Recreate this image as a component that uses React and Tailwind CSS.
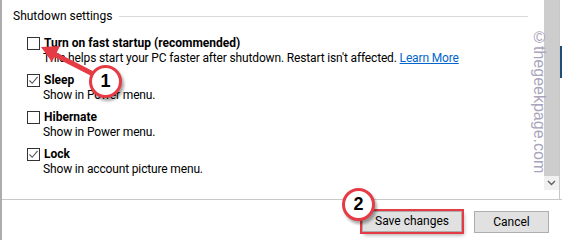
import React from "react";

const Checkbox = ({ checked }) => (
  <span className="w-[13px] h-[13px] border border-[#333333] bg-white flex items-center justify-center shrink-0">
    {checked && (
      <svg width="11" height="11" viewBox="0 0 11 11">
        <path d="M1.5 5.5 L4.2 8.3 L9.6 1.8" fill="none" stroke="#555" strokeWidth="1.1" />
      </svg>
    )}
  </span>
);

const Option = ({ label, checked, children }) => (
  <div className="flex flex-col mb-[7px]">
    <div className="flex items-center h-[15px] gap-[4px]">
      <Checkbox checked={checked} />
      <span className="font-bold leading-[15px]">{label}</span>
    </div>
    <div className="h-[15px] leading-[15px] pl-[16px] tracking-[-0.15px]">{children}</div>
  </div>
);

const Badge = ({ n, className }) => (
  <div
    className={
      "absolute w-[33px] h-[33px] rounded-full bg-white border-[3px] border-[#e53b45] flex items-center justify-center font-bold text-[18px] text-black shadow-[2px_3px_3px_rgba(0,0,0,0.35)] " +
      className
    }
    style={{ fontFamily: "'Liberation Sans', Arial, sans-serif" }}
  >
    {n}
  </div>
);

export default function App() {
  return (
    <div
      className="relative w-[562px] h-[240px] bg-white overflow-hidden text-[12px] text-black border-l-2 border-[#acacac]"
      style={{ fontFamily: "'Segoe UI', Roboto, 'Noto Sans', sans-serif" }}
    >
      <div className="flex h-[199px]">
        <div className="flex-1 flex flex-col pt-[8px] pl-[11px]">
          <div className="flex items-center h-4 mr-[16px]">
            <span className="leading-4">Shutdown settings</span>
            <div className="flex-1 h-px bg-[#d9d9d9] ml-[7px]" />
          </div>
          <div className="flex flex-col pl-[14px] mt-[12px]">
            <Option label="Turn on fast startup (recommended)">
              This helps start your PC faster after shutdown. Restart isn't affected.{" "}
              <span className="text-[#0066cc] underline">Learn More</span>
            </Option>
            <Option label="Sleep" checked>
              Show in Power menu.
            </Option>
            <Option label="Hibernate">Show in Power menu.</Option>
            <Option label="Lock" checked>
              Show in account picture menu.
            </Option>
          </div>
        </div>
        <div className="w-[15px] flex flex-col">
          <div className="h-[176px] bg-[#cdcdcd]" />
          <div className="h-[14px] bg-[#f0f0f0] flex items-center justify-center">
            <svg width="9" height="6" viewBox="0 0 9 6">
              <path d="M1 1 L4.5 4.5 L8 1" fill="none" stroke="#606060" strokeWidth="1.4" />
            </svg>
          </div>
        </div>
        <div className="w-[3px] flex flex-col border-l border-[#c8c8c8]">
          <div className="h-[46px]" />
          <div className="h-[32px] bg-[#1f4e79]" />
        </div>
      </div>
      <div className="border-t border-[#c8c8c8] flex justify-end gap-[12px] pt-[11px] pr-[13px]">
        <button className="w-[100px] h-[21px] bg-[#e1e1e1] border border-[#adadad] text-[12px] leading-[19px] ring-2 ring-[#e53b45] shadow-[2px_3px_4px_rgba(0,0,0,0.35)]">
          Save changes
        </button>
        <button className="w-[75px] h-[22px] bg-[#e1e1e1] border border-[#adadad] text-[12px] leading-[20px]">
          Cancel
        </button>
      </div>

      <div
        className="absolute left-[525px] top-[29px] text-[16px] text-[#aaa4bc] [writing-mode:vertical-rl]"
        style={{ fontFamily: "'Liberation Sans', Arial, sans-serif" }}
      >
        ©thegeekpage.com
      </div>

      <svg className="absolute left-0 top-0" width="562" height="240">
        <line x1="93" y1="75" x2="50" y2="53" stroke="#e53b45" strokeWidth="5" strokeLinecap="round" />
        <polygon points="39,47 58,46 50,62" fill="#e53b45" />
      </svg>
      <Badge n="1" className="left-[87px] top-[65px]" />
      <Badge n="2" className="left-[340px] top-[188px]" />
    </div>
  );
}
